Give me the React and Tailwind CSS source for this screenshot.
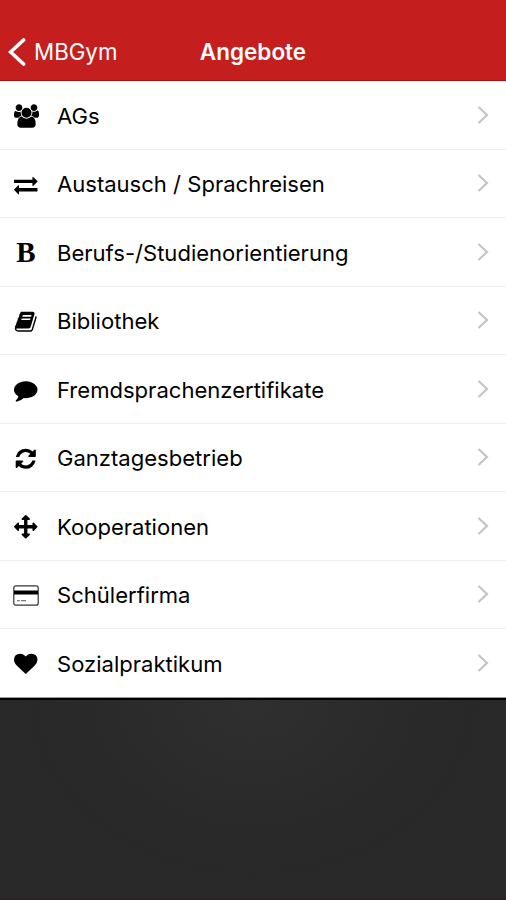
import React from 'react';

const icons = {
  users: {
    size: 'w-[25px] h-[24px]',
    viewBox: '0 0 1920 1792',
    d: 'M593 896q-162 5-265 128h-134q-82 0-138-40.5t-56-118.5q0-353 124-353 6 0 43.5 21t97.5 42.5 119 21.5q67 0 133-23-5 37-5 66 0 159 90 287zm1071 637q0 120-73 189.5t-194 69.5h-874q-121 0-194-69.5t-73-189.5q0-53 3.5-103.5t14-109 26.5-108.5 43-97.5 62-81 85.5-53.5 111.5-20q10 0 43 21.5t73 48 107 48 135 21.5 135-21.5 107-48 73-48 43-21.5q61 0 111.5 20t85.5 53.5 62 81 43 97.5 26.5 108.5 14 109 3.5 103.5zm-1024-1277q0 106-75 181t-181 75-181-75-75-181 75-181 181-75 181 75 75 181zm704 384q0 159-112.5 271.5t-271.5 112.5-271.5-112.5-112.5-271.5 112.5-271.5 271.5-112.5 271.5 112.5 112.5 271.5zm576 225q0 78-56 118.5t-138 40.5h-134q-103-123-265-128 90-128 90-287 0-29-5-66 66 23 133 23 59 0 119-21.5t97.5-42.5 43.5-21q124 0 124 353zm-128-609q0 106-75 181t-181 75-181-75-75-181 75-181 181-75 181 75 75 181z',
  },
  exchange: {
    size: 'size-[23.5px]',
    viewBox: '0 0 1792 1792',
    d: 'M1792 1184v192q0 13-9.5 22.5t-22.5 9.5h-1376v192q0 13-9.5 22.5t-22.5 9.5q-12 0-24-10l-319-320q-9-9-9-22 0-14 9-23l320-320q9-9 23-9 13 0 22.5 9.5t9.5 22.5v192h1376q13 0 22.5 9.5t9.5 22.5zm0-544q0 14-9 23l-320 320q-9 9-23 9-13 0-22.5-9.5t-9.5-22.5v-192h-1376q-13 0-22.5-9.5t-9.5-22.5v-192q0-13 9.5-22.5t22.5-9.5h1376v-192q0-14 9-23t23-9q12 0 24 10l319 319q9 9 9 23z',
  },
  book: {
    size: 'size-[23.5px]',
    viewBox: '0 0 1792 1792',
    d: 'M1703 478q40 57 18 129l-275 906q-19 64-76.5 107.5t-122.5 43.5h-923q-77 0-148.5-53.5t-99.5-131.5q-24-67-2-127 0-4 3-27t4-37q1-8-3-21.5t-3-19.5q2-11 8-21t16.5-23.5 16.5-23.5q23-38 45-91.5t30-91.5q3-10 .5-30t-.5-28q3-11 17-28t17-23q21-36 42-92t25-90q1-9-2.5-32t.5-28q4-13 22-30.5t22-22.5q19-26 42.5-84.5t27.5-96.5q1-8-3-25.5t-2-26.5q2-8 9-18t18-23 17-21q8-12 16.5-30.5t15-35 16-36 19.5-32 26.5-23.5 36-11.5 47.5 5.5l-1 3q38-9 51-9h761q74 0 114 56t18 130l-274 906q-36 119-71.5 153.5t-128.5 34.5h-869q-27 0-38 15-11 16-1 43 24 70 144 70h923q29 0 56-15.5t35-41.5l300-987q7-22 5-57 38 15 59 43zm-1064 2q-4 13 2 22.5t20 9.5h608q13 0 25.5-9.5t16.5-22.5l21-64q4-13-2-22.5t-20-9.5h-608q-13 0-25.5 9.5t-16.5 22.5zm-83 256q-4 13 2 22.5t20 9.5h608q13 0 25.5-9.5t16.5-22.5l21-64q4-13-2-22.5t-20-9.5h-608q-13 0-25.5 9.5t-16.5 22.5z',
  },
  comment: {
    size: 'size-[23.5px]',
    viewBox: '0 0 1792 1792',
    d: 'M1792 896q0 174-120 321.5t-326 233-450 85.5q-70 0-145-8-198 175-460 242-49 14-114 22-17 2-30.5-9t-17.5-29v-1q-3-4-.5-12t2-10 4.5-9.5l6-9 7-8.5 8-9q7-8 31-34.5t34.5-38 31-39.5 32.5-51 27-59 26-76q-157-89-247.5-220t-90.5-281q0-130 71-248.5t191-204.5 286-136.5 348-50.5q244 0 450 85.5t326 233 120 321.5z',
  },
  refresh: {
    size: 'size-[23.5px]',
    viewBox: '0 0 1792 1792',
    d: 'M1639 1056q0 5-1 7-64 268-268 434.5t-478 166.5q-146 0-282.5-55t-243.5-157l-129 129q-19 19-45 19t-45-19-19-45v-448q0-26 19-45t45-19h448q26 0 45 19t19 45-19 45l-137 137q71 66 161 102t187 36q134 0 250-65t186-179q11-17 53-117 8-23 30-23h192q13 0 22.5 9.5t9.5 22.5zm25-800v448q0 26-19 45t-45 19h-448q-26 0-45-19t-19-45 19-45l138-138q-148-137-349-137-134 0-250 65t-186 179q-11 17-53 117-8 23-30 23h-199q-13 0-22.5-9.5t-9.5-22.5v-7q65-268 270-434.5t480-166.5q146 0 284 55.5t245 156.5l130-129q19-19 45-19t45 19 19 45z',
  },
  arrows: {
    size: 'size-[23.5px]',
    viewBox: '0 0 1792 1792',
    d: 'M1792 896q0 26-19 45l-256 256q-19 19-45 19t-45-19-19-45v-128h-384v384h128q26 0 45 19t19 45-19 45l-256 256q-19 19-45 19t-45-19l-256-256q-19-19-19-45t19-45 45-19h128v-384h-384v128q0 26-19 45t-45 19-45-19l-256-256q-19-19-19-45t19-45l256-256q19-19 45-19t45 19 19 45v128h384v-384h-128q-26 0-45-19t-19-45 19-45l256-256q19-19 45-19t45 19l256 256q19 19 19 45t-19 45-45 19h-128v384h384v-128q0-26 19-45t45-19 45 19l256 256q19 19 19 45z',
  },
  heart: {
    size: 'size-[23.5px]',
    viewBox: '0 0 1792 1792',
    d: 'M896 1664q-26 0-44-18l-624-602q-10-8-27.5-26t-55.5-65.5-68-97.5-53.5-121-23.5-138q0-220 127-344t351-124q62 0 126.5 21.5t120 58 95.5 68.5 76 68q36-36 76-68t95.5-68.5 120-58 126.5-21.5q224 0 351 124t127 344q0 221-229 450l-623 600q-18 18-44 18z',
  },
};

const items = [
  { label: 'AGs', icon: 'users' },
  { label: 'Austausch / Sprachreisen', icon: 'exchange' },
  { label: 'Berufs-/Studienorientierung', icon: 'bold' },
  { label: 'Bibliothek', icon: 'book' },
  { label: 'Fremdsprachenzertifikate', icon: 'comment' },
  { label: 'Ganztagesbetrieb', icon: 'refresh' },
  { label: 'Kooperationen', icon: 'arrows' },
  { label: 'Schülerfirma', icon: 'card' },
  { label: 'Sozialpraktikum', icon: 'heart' },
];

const ItemIcon = ({ name }) => {
  if (name === 'bold') {
    return <span className="font-['Liberation_Serif',serif] text-[29px] leading-none font-bold">B</span>;
  }
  if (name === 'card') {
    return (
      <svg className="h-[21px] w-[26px]" viewBox="0 0 26 21" fill="none">
        <rect x="0.8" y="0.8" width="24.4" height="19.4" rx="2" stroke="#333333" strokeWidth="1.2" />
        <path d="M1 7.5h24" stroke="#000000" strokeWidth="4" />
        <path d="M4 15.7h2.8M8 15.7h5" stroke="#777777" strokeWidth="1.2" />
      </svg>
    );
  }
  const icon = icons[name];
  return (
    <svg className={icon.size} viewBox={icon.viewBox} fill="currentColor">
      <path d={icon.d} />
    </svg>
  );
};

const Header = () => (
  <header className="grid h-[81px] grid-cols-[1fr_auto_1fr] items-end border-b border-[#b00a0c] bg-[#c41e1e] pb-3 text-white">
    <button className="flex items-center pl-2">
      <svg className="h-[30px] w-[18px]" viewBox="0 0 18 30" fill="none" stroke="currentColor" strokeWidth="3.6" strokeLinecap="round">
        <path d="M15.6 3 L2.6 15 L15.6 27" />
      </svg>
      <span className="ml-2 text-[22.3px] leading-8">MBGym</span>
    </button>
    <h1 className="text-[22.5px] leading-8 font-semibold">Angebote</h1>
    <div />
  </header>
);

const Row = ({ item }) => (
  <li className="flex h-[68.5px] items-center border-b border-[#efefef] pt-0.5 text-black last:border-[#999999]">
    <div className="flex w-[52px] items-center justify-center">
      <ItemIcon name={item.icon} />
    </div>
    <span className="ml-[5px] flex-1 text-[22.05px] leading-8">{item.label}</span>
    <svg className="mr-[17px] mb-0.5 h-[18px] w-3" viewBox="0 0 12 18" fill="none" stroke="#c4c4c6" strokeWidth="2.2">
      <path d="M1.5 1 L10 9 L1.5 17" />
    </svg>
  </li>
);

export default function App() {
  return (
    <div className="flex h-[900px] w-[506px] flex-col overflow-hidden bg-[#292929] font-['Inter',sans-serif]">
      <Header />
      <ul className="bg-white">
        {items.map((item) => (
          <Row key={item.label} item={item} />
        ))}
      </ul>
      <div className="flex-1 border-t-2 border-black bg-[radial-gradient(ellipse_at_top,#2f2f2f,#282828_60%,#292929)]" />
      <div className="h-0.5 bg-[#2a2326]" />
    </div>
  );
}
